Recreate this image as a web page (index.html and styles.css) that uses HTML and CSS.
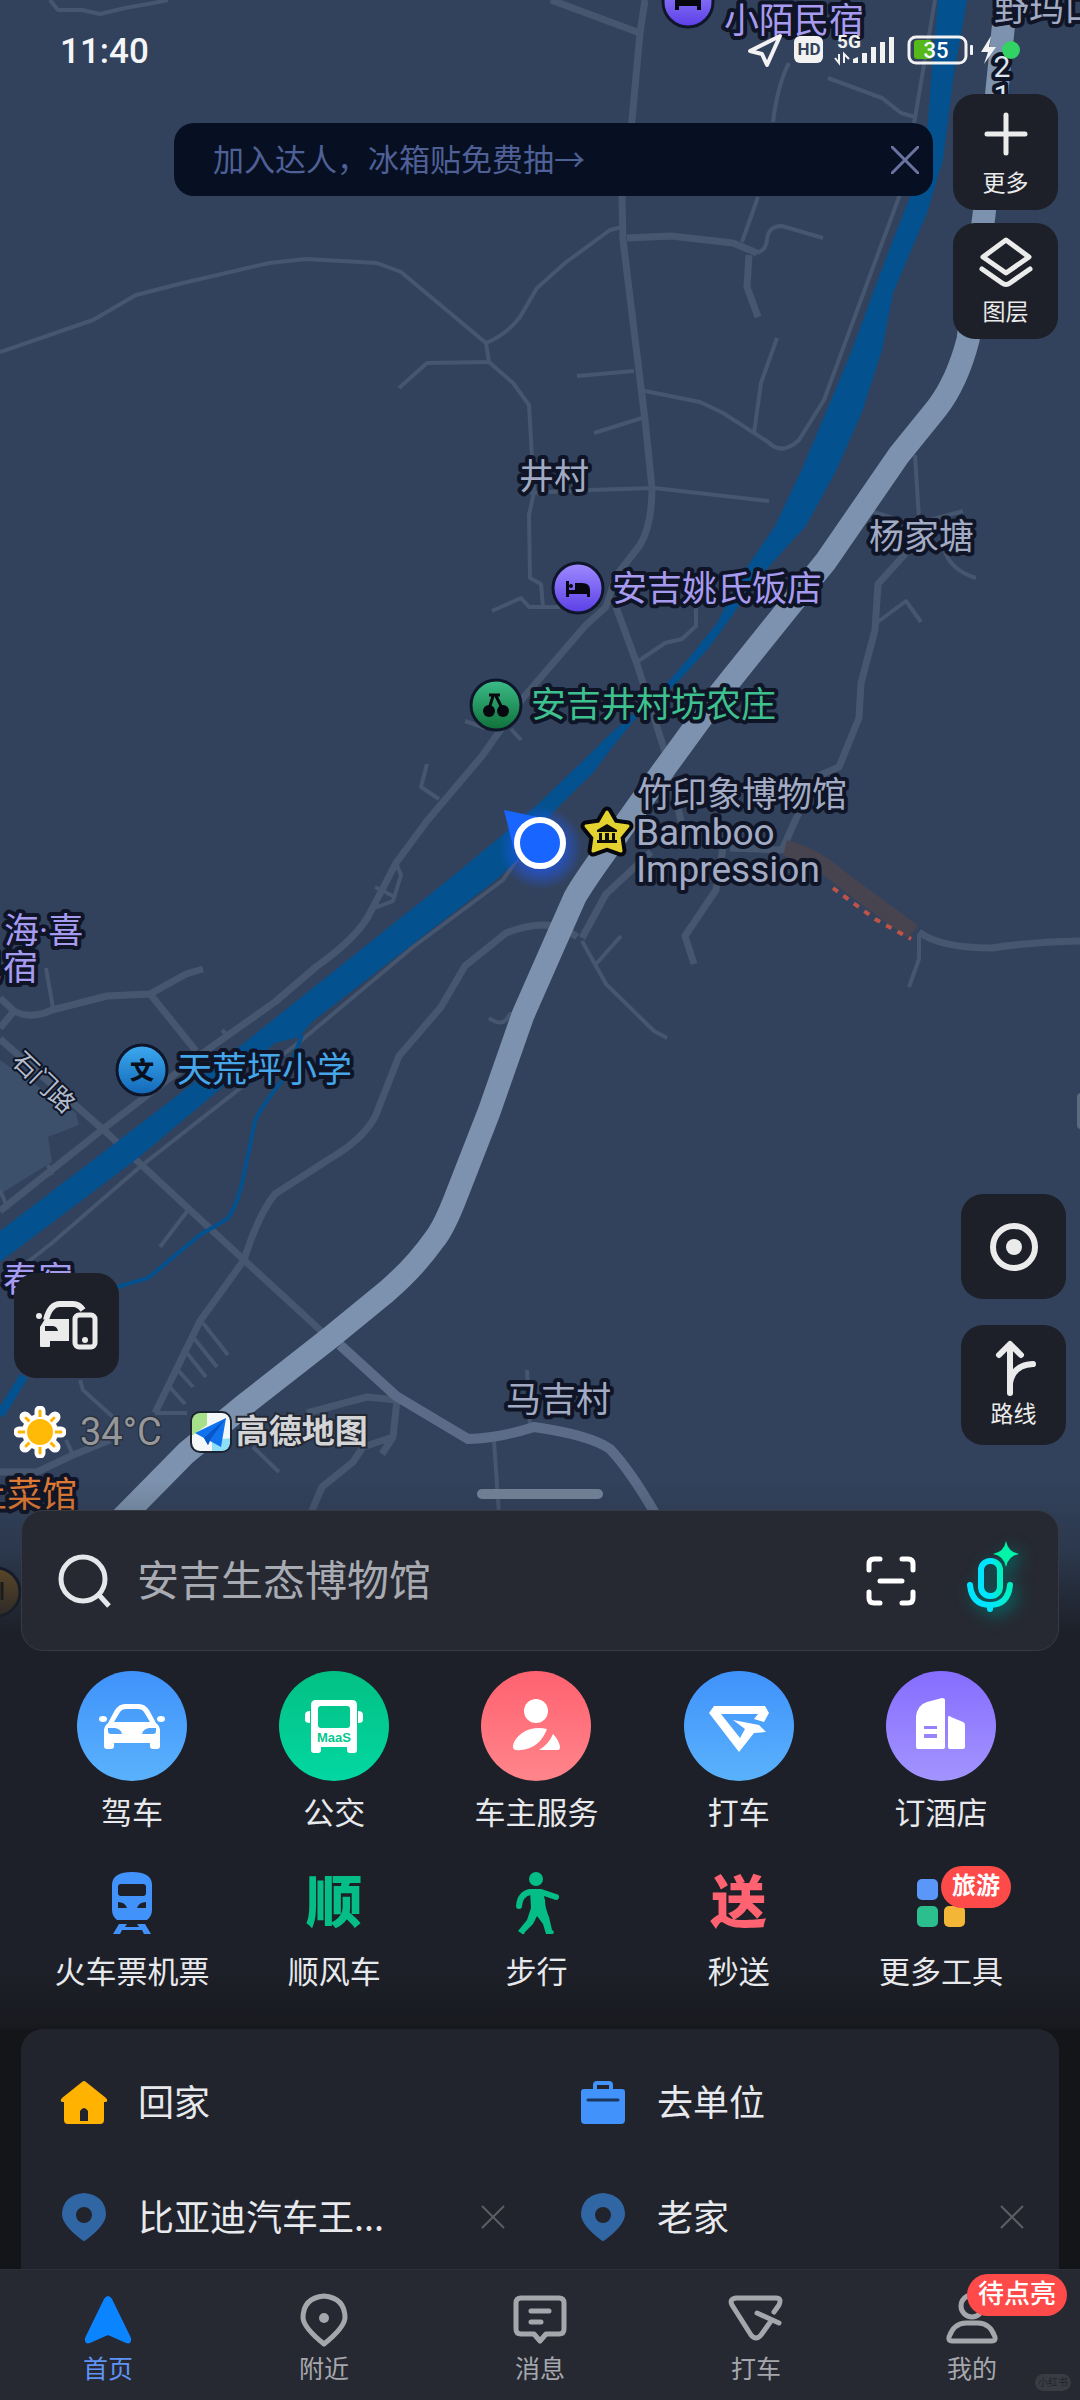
FILE: index.html
```html
<!DOCTYPE html>
<html lang="zh-CN">
<head>
<meta charset="utf-8">
<meta name="viewport" content="width=device-width, initial-scale=1">
<title>高德地图</title>
<link rel="stylesheet" href="styles.css">
</head>
<body>
<div class="app">
  <svg class="map" viewBox="0 0 1080 1660" preserveAspectRatio="xMidYMin slice" role="img" aria-label="地图">
    <defs>
      <linearGradient id="fade" x1="0" y1="0" x2="0" y2="1"><stop offset="0" stop-color="#1d2028" stop-opacity="0"/><stop offset=".4" stop-color="#1d2028" stop-opacity=".3"/><stop offset=".85" stop-color="#1d2028"/><stop offset="1" stop-color="#1d2028"/></linearGradient>
      <linearGradient id="violet" x1="0" y1="0" x2="0" y2="1"><stop offset="0" stop-color="#9f8bff"/><stop offset="1" stop-color="#5b3fe6"/></linearGradient>
      <linearGradient id="green" x1="0" y1="0" x2="0" y2="1"><stop offset="0" stop-color="#3cbd8a"/><stop offset="1" stop-color="#0f7038"/></linearGradient>
      <linearGradient id="azure" x1="0" y1="0" x2="0" y2="1"><stop offset="0" stop-color="#3da9f0"/><stop offset="1" stop-color="#1268b8"/></linearGradient>
      <radialGradient id="glow"><stop offset=".5" stop-color="#1f5cff" stop-opacity=".6"/><stop offset="1" stop-color="#1f5cff" stop-opacity="0"/></radialGradient>
    </defs>
    <rect width="1080" height="1660" fill="#32425c"/>
    <path fill="#3c506c" d="M0 1060L76 1113L79 1125L48 1137L52 1162L0 1194Z"/>
    <g class="road thin">
      <path d="M50 0L58 10L82 10L100 14L125 8L148 4L168 0"/>
      <path d="M0 352L93 320L136 295L183 283L269 263L306 259L377 263L401 272L486 343L489 362L513 383L529 405L534 492L529 515L530 578L541 584L543 607"/>
      <path d="M492 611L521 598L529 607L560 607"/>
      <path d="M486 343Q506 335 520 317L537 288L565 263L610 230L622 227"/>
      <path d="M399 388L427 363L489 362M577 376L634 371M594 433L642 418M530 493L590 490L654 488L769 501"/>
      <path d="M757 253Q766 250 767 240Q768 226 782 226L823 238"/>
      <path d="M789 63Q778 83 773 122M758 197L742 242M828 78L882 98L901 113L915 117"/>
      <path d="M935 0L915 118L899 197L824 400L799 440Q782 456 768 442L723 413L700 402L645 391M777 338L761 383L754 433"/>
      <path d="M915 455L919 519M871 511L902 521L930 520L963 511M944 549Q950 570 976 578M875 624L906 601L921 622"/>
      <path d="M919 934V959L909 987M696 607V626L682 639L665 643L637 662M427 764L421 787L439 799M465 721L485 728M511 729L521 740M396 863L401 875L393 901L372 909M375 887L393 896"/>
      <path d="M582 941L606 984L654 1031L667 1038M621 936L596 964M489 1018Q500 1026 506 1020L510 1014H518"/>
      <path d="M530 840L503 880L413 947L303 1039L141 1166L52 1243L20 1268"/>
      <path d="M46 968L53 1008M189 1209L172 1231L160 1247M0 1190L8 1209M222 1030L228 1036M48 1165L52 1175"/>
      <path d="M203 1323L228 1355M193 1337L217 1367M187 1353L206 1377M177 1369L193 1387M168 1385L185 1404"/>
      <path d="M80 1380L83 1390L113 1417M155 1413L187 1413M253 1447L279 1472M527 1370L530 1427M494 1441L499 1515M66 1440L73 1455"/>
    </g>
    <g class="road mid">
      <path d="M645 0L640 33L632 120L622 197L623 240L645 420L652 488Q652 525 640 545L616 576L606 607L585 626L523 698L482 756L427 821L396 863L372 909Q360 936 317 966L275 1002L200 1055L103 1129L0 1211"/>
      <path d="M616 607L637 664L665 752L682 825"/>
      <path d="M551 0L640 33M627 238L671 236L733 243L757 253M749 255L747 287L758 317"/>
      <path d="M906 553L878 584L875 630L861 683L859 718L839 767L816 777L795 821L782 850L730 848M723 848L716 890L685 936L694 964"/>
      <path d="M919 932Q940 948 992 948Q1030 942 1080 941M651 852L606 894L582 938"/>
      <path d="M577 937Q551 915 506 933L465 966L441 1007L399 1056L375 1117Q362 1140 331 1158L275 1194Q258 1215 244 1260L200 1321L155 1413"/>
      <path d="M0 1039L107 1133L244 1260L331 1340"/>
      <path d="M0 998L14 1011Q31 1020 52 1010L107 996L150 994L186 974L203 969M150 994L196 1051M14 1011L0 1028"/>
      <path d="M0 1472H37L73 1455L110 1440M310 1515L322 1487L353 1462L363 1447L393 1437L397 1400L367 1397L307 1413M393 1437L382 1454"/>
    </g>
    <path fill="#04518f" d="M938 0H967L953 80L943 160L927 213L893 293L882 350L862 412L837 469L806 526L793 540L757 580L727 623L707 650L673 687L640 713L610 750L593 773L553 812L530 848L496 880L313 1021L299 1037L275 1043L138 1158L0 1262V1231L169 1102L244 1043L448 880L506 832L537 805L587 757L607 737L634 713L667 683L693 653L717 623L743 573L775 526L802 469L826 412L852 350L873 293L893 240L910 197L928 123L931 80Z"/>
    <path class="stream" d="M302 1035L286 1076Q262 1105 255 1121L244 1174Q238 1205 227 1219L200 1235L148 1278L117 1287"/>
    <path class="stream wide" d="M24 1376L0 1415"/>
    <path class="byway" d="M340 1345L396 1396L468 1439Q500 1438 534 1427Q590 1435 610 1449Q630 1470 656 1515"/>
    <path class="highway" d="M1004 20L997 90L984 215L968 340Q957 382 937 408L899 455L826 561L716 698L654 783L606 851Q585 880 575 897L556 940L523 1015L489 1112L457 1194Q444 1228 434 1240Q415 1267 386 1292L331 1337L248 1402L186 1453L118 1522"/>
    <path class="works" d="M785 848Q815 856 840 878L913 932"/>
    <path class="works-line" d="M833 888L875 919L911 939"/>

    <g class="pin">
      <circle cx="688" cy="2" r="25" fill="url(#violet)"/>
      <path fill="#07080f" stroke="none" d="M675 -12V10H679V6H697V10H701V-2L690 -8H679V-12Z"/>
      <circle cx="578" cy="588" r="25" fill="url(#violet)"/>
      <path fill="#07080f" stroke="none" d="M566 581V597H569V594H587V597H590V590Q590 583 582 583H575V590H569V581ZM569 586a2 2 0 1 0 4 0a2 2 0 1 0-4 0Z"/>
      <circle cx="496" cy="705" r="25" fill="url(#green)"/>
      <path fill="none" stroke="#07080f" stroke-width="3" d="M489 695H500M493 696L489 709M496 696L502 708"/>
      <circle cx="489" cy="711" r="6" fill="#07080f" stroke="none"/><circle cx="503" cy="711" r="6" fill="#07080f" stroke="none"/>
      <circle cx="142" cy="1070" r="25" fill="url(#azure)"/>
      <circle cx="-4" cy="1592" r="24" fill="#8a6428"/>
      <path fill="none" stroke="#171308" d="M2 1582V1600"/>
      <path fill="#07080f" stroke="#07080f" stroke-width="11" stroke-linejoin="round" d="M607 812L614 824L628 826L619 837L621 851L607 846L593 851L595 837L586 826L600 824Z"/>
      <path fill="#e3d22f" stroke="#e3d22f" stroke-linejoin="round" d="M607 812L614 824L628 826L619 837L621 851L607 846L593 851L595 837L586 826L600 824Z"/>
      <path fill="#0d0d0a" stroke="none" d="M607 824L617 830V832H597V830ZM599 833H602V840H599ZM605 833H609V840H605ZM612 833H615V840H612ZM597 840H617V843H597Z"/>
    </g>
    <g class="labels">
      <text class="lodging" x="724" y="33">小陌民宿</text>
      <text class="village" x="994" y="21">野玛口</text>
      <text class="village" x="519" y="489">井村</text>
      <text class="village" x="869" y="549">杨家塘</text>
      <text class="lodging" x="612" y="601">安吉姚氏饭店</text>
      <text class="farm" x="531" y="717">安吉井村坊农庄</text>
      <text class="village" x="637" y="807">竹印象博物馆</text>
      <text class="village latin" x="636" y="845">Bamboo</text>
      <text class="village latin" x="636" y="882">Impression</text>
      <text class="lodging" x="4" y="943">海·喜</text>
      <text class="lodging" x="-32" y="980">民宿</text>
      <text class="school" x="177" y="1082">天荒坪小学</text>
      <text class="school-glyph" x="142" y="1079">文</text>
      <text class="street" x="44" y="1091" transform="rotate(44 44 1082)">石门路</text>
      <text class="lodging" x="3" y="1292">春宿</text>
      <text class="village" x="506" y="1412">马吉村</text>
      <text class="food" x="-28" y="1507">土菜馆</text>
      <text class="shield" x="1002" y="77">2</text>
      <text class="shield" x="1002" y="106">1</text>
    </g>
    <circle cx="541" cy="848" r="42" fill="url(#glow)"/>
    <path fill="#1866ff" d="M504 810L542 818L514 850Z"/>
    <circle cx="540" cy="843" r="23" fill="#1866ff" stroke="#fff" stroke-width="6"/>
    <rect x="1077" y="1093" width="8" height="36" rx="4" fill="#5c6a80"/>
    <rect y="1480" width="1080" height="180" fill="url(#fade)"/>
  </svg>

  <main class="stage">
    <header class="status">
      <time>11:40</time>
      <svg width="272" height="38" viewBox="0 0 272 38" role="img" aria-label="状态">
        <path d="M2 19L32 4L19 33L14 22Z" fill="none" stroke="#f2f2f2" stroke-width="4" stroke-linejoin="round"/>
        <rect x="46" y="4" width="29" height="27" rx="6" fill="#f2f2f2"/>
        <text class="hd" x="61" y="23">HD</text>
        <text class="cell" x="89" y="16">5G</text>
        <path d="M91 22V31L87 26M96 31V22L101 27" fill="none" stroke="#f2f2f2" stroke-width="2"/>
        <path d="M105 31V27L110 25V31ZM114 21h5v10h-5zM123 15h5v16h-5zM132 10h5v21h-5zM141 5h5v26h-5z" fill="#f2f2f2"/>
        <rect x="166" y="8" width="18" height="19" rx="3" fill="#55b91b"/>
        <rect x="161" y="5" width="57" height="26" rx="7" fill="none" stroke="#f2f2f2" stroke-width="3"/>
        <rect x="222" y="13" width="3" height="10" rx="1" fill="#f2f2f2"/>
        <text class="charge" x="188" y="26">35</text>
        <path d="M243 4L233 20H240L236 32L248 15H241Z" fill="#f2f2f2"/>
        <circle cx="263" cy="18" r="9" fill="#33d264"/>
      </svg>
    </header>

    <div class="top-row">
      <aside class="promo">
        <a href="#">加入达人，冰箱贴免费抽→</a>
        <button type="button" aria-label="关闭"><svg width="28" height="28" viewBox="0 0 28 28"><path d="M1 1L27 27M27 1L1 27" stroke="#6a749f" stroke-width="3" stroke-linecap="round"/></svg></button>
      </aside>
      <div class="tool-stack">
        <button class="map-btn" type="button">
          <svg width="56" height="56" viewBox="0 0 56 56"><path d="M28 9V47M9 28H47" stroke="#ebebeb" stroke-width="5" stroke-linecap="round"/></svg>更多
        </button>
        <button class="map-btn" type="button">
          <svg width="56" height="56" viewBox="0 0 56 56"><g fill="none" stroke="#ebebeb" stroke-width="5" stroke-linejoin="round" stroke-linecap="round"><path d="M28 5L51 22L28 38L5 22Z"/><path d="M4 34L24 48Q28 51 32 48L52 34"/></g></svg>图层
        </button>
      </div>
    </div>

    <div class="map-foot">
      <div class="foot-left">
        <button class="map-btn" type="button" aria-label="车机互联">
          <svg width="64" height="50" viewBox="0 0 64 50"><path d="M11 19Q15 3 25 3H38Q44 3 48 9" fill="none" stroke="#ebebeb" stroke-width="6"/><circle cx="4" cy="15" r="3" fill="#ebebeb"/><path fill="#ebebeb" fill-rule="evenodd" d="M10 18H34V40H15V45Q15 46 14 46H6Q5 46 5 45V26ZM10 25V30H23Q22 25 17 25Z"/><rect x="40" y="14" width="20" height="32" rx="4" fill="none" stroke="#ebebeb" stroke-width="5"/><circle cx="50" cy="39" r="3" fill="#ebebeb"/></svg>
        </button>
        <div class="weather">
          <svg width="52" height="52" viewBox="0 0 52 52"><path d="M26 5V47M5 26H47M11 11L41 41M41 11L11 41" stroke="#fff" stroke-width="11" stroke-linecap="round"/><circle cx="26" cy="26" r="18" fill="#fff"/><path d="M26 5V47M5 26H47M12 12L40 40M40 12L12 40" stroke="#ffb400" stroke-width="3" stroke-linecap="round"/><circle cx="26" cy="26" r="15" fill="#fff"/><circle cx="26" cy="26" r="13" fill="#ffba08"/></svg>
          <span class="temp">34°C</span>
          <svg width="42" height="42" viewBox="0 0 42 42"><clipPath id="tile"><rect x="2" y="2" width="38" height="38" rx="8"/></clipPath><g clip-path="url(#tile)"><path fill="#f4f7f8" d="M0 0H42V42H0Z"/><path fill="#a7e08a" d="M0 0H17V14L0 26Z"/><path fill="#8fe0f7" d="M22 29L42 27V42H22Z"/></g><path fill="#1172ee" d="M36 7L5 22L14 27L18 34L20 30L31 36Z"/><path fill="#0a55c8" d="M36 7L14 27L18 34L20 29Z"/><rect x="1" y="1" width="40" height="40" rx="9" fill="none" stroke="#1c2431" stroke-width="2"/></svg>
          <strong class="brand">高德地图</strong>
        </div>
      </div>
      <div class="foot-right">
        <button class="map-btn" type="button" aria-label="定位"><svg width="50" height="50" viewBox="0 0 50 50"><circle cx="25" cy="25" r="21" fill="none" stroke="#ebebeb" stroke-width="6"/><circle cx="25" cy="25" r="8" fill="#ebebeb"/></svg></button>
        <button class="map-btn" type="button"><svg width="56" height="60" viewBox="0 0 56 60"><g fill="none" stroke="#ebebeb" stroke-width="6" stroke-linecap="round" stroke-linejoin="round"><path d="M24 54V6M13 16L24 5L35 16"/><path d="M24 44Q27 26 47 25"/></g></svg>路线</button>
      </div>
    </div>
    <div class="handle"></div>
  </main>

  <section class="sheet">
    <form class="search">
      <svg width="54" height="54" viewBox="0 0 54 54"><circle cx="25" cy="25" r="22" fill="none" stroke="#e6e7ea" stroke-width="5"/><path d="M41 41L51 52" stroke="#e6e7ea" stroke-width="5"/></svg>
      <input type="search" placeholder="安吉生态博物馆" aria-label="搜索地点">
      <button type="button" aria-label="扫一扫"><svg width="52" height="52" viewBox="0 0 52 52"><path d="M4 15V9Q4 4 9 4H15M37 4H43Q48 4 48 9V15M48 37V43Q48 48 43 48H37M15 48H9Q4 48 4 43V37M15 26H37" fill="none" stroke="#fff" stroke-width="5" stroke-linecap="round"/></svg></button>
      <button type="button" aria-label="语音搜索"><svg class="mic" width="54" height="84" viewBox="0 0 54 84"><defs><linearGradient id="aqua" x1="0" y1="0" x2="1" y2="0"><stop offset=".5" stop-color="#00e5ff"/><stop offset="1" stop-color="#00f0c0"/></linearGradient></defs><g fill="none" stroke="url(#aqua)" stroke-width="6" stroke-linecap="round"><rect x="15" y="22" width="19" height="35" rx="9"/><path d="M4 46Q6 66 24 66Q42 66 44 46M24 67V70"/></g><path fill="#00f5a8" d="M40 2Q42 13 53 15Q42 17 40 28Q38 17 27 15Q38 13 40 2Z"/></svg></button>
    </form>

    <nav class="tools" aria-label="出行工具">
      <a href="#"><svg class="disc" viewBox="0 0 110 110"><defs><linearGradient id="b1" x1="0" y1="0" x2="0" y2="1"><stop stop-color="#3f92fb"/><stop offset="1" stop-color="#5ab2fc"/></linearGradient></defs><circle cx="55" cy="55" r="55" fill="url(#b1)"/><path fill="#fff" fill-rule="evenodd" d="M31 52L38 39Q42 33 48 33H62Q68 33 72 39L79 52Q83 55 83 60V75Q83 78 80 78H76Q73 78 73 75V72H37V75Q37 78 34 78H30Q27 78 27 75V60Q27 55 31 52ZM37 51H73L67 41Q65 38 61 38H49Q45 38 43 41ZM31 57V60Q31 63 34 63H45Q44 58 38 57ZM79 57V60Q79 63 76 63H65Q66 58 72 57Z"/><ellipse cx="26" cy="48" rx="4" ry="3" fill="#fff"/><ellipse cx="84" cy="48" rx="4" ry="3" fill="#fff"/></svg><span>驾车</span></a>
      <a href="#"><svg class="disc" viewBox="0 0 110 110"><defs><linearGradient id="g1" x1="0" y1="0" x2="0" y2="1"><stop stop-color="#02c083"/><stop offset="1" stop-color="#03d7a2"/></linearGradient></defs><circle cx="55" cy="55" r="55" fill="url(#g1)"/><path fill="#fff" fill-rule="evenodd" d="M37 29H73Q78 29 78 34V79Q78 82 75 82H71Q68 82 68 79V76H42V79Q42 82 39 82H35Q32 82 32 79V34Q32 29 37 29ZM42 35Q39 35 39 38V54Q39 57 42 57H68Q71 57 71 54V38Q71 35 68 35ZM31 40Q26 40 26 44V49Q26 52 31 52ZM79 40Q84 40 84 44V49Q84 52 79 52Z"/><text class="maas" x="55" y="71">MaaS</text></svg><span>公交</span></a>
      <a href="#"><svg class="disc" viewBox="0 0 110 110"><defs><linearGradient id="r1" x1="0" y1="0" x2="0" y2="1"><stop stop-color="#ff6270"/><stop offset="1" stop-color="#ff858b"/></linearGradient></defs><circle cx="55" cy="55" r="55" fill="url(#r1)"/><g fill="#fff"><circle cx="55" cy="40" r="12"/><path d="M66 58Q52 55 41 62Q32 69 32 76Q32 80 40 79Q59 77 66 58Z"/><path d="M72 63Q78 69 79 76Q79 79 77 79H58Q68 73 72 63Z"/></g></svg><span>车主服务</span></a>
      <a href="#"><svg class="disc" viewBox="0 0 110 110"><circle cx="55" cy="55" r="55" fill="url(#b1)"/><path fill="#fff" d="M30 35H81L85 42L80 51L70 48L74 43H37L56 67L61 58L49 49L75 54L82 61L70 62L55 81L25 42Z"/></svg><span>打车</span></a>
      <a href="#"><svg class="disc" viewBox="0 0 110 110"><defs><linearGradient id="v1" x1="0" y1="0" x2="0" y2="1"><stop stop-color="#866dff"/><stop offset="1" stop-color="#a394ff"/></linearGradient></defs><circle cx="55" cy="55" r="55" fill="url(#v1)"/><path fill="#fff" fill-rule="evenodd" d="M30 76V46Q31 34 41 31L56 27Q59 27 59 29V76Q59 78 57 78H32Q30 78 30 76ZM38 55V58H51V55ZM38 63V67H51V63ZM62 46Q63 44 65 46L77 51Q79 52 79 54V76Q79 78 77 78H64Q62 78 62 76Z"/></svg><span>订酒店</span></a>

      <a href="#"><svg class="glyph" viewBox="0 0 66 66"><path fill="#4193fb" fill-rule="evenodd" d="M13 14Q14 2 33 2Q52 2 53 14V40Q53 46 48 50H18Q13 46 13 40ZM22 14Q19 14 19 17V23Q19 26 22 26H44Q47 26 47 23V17Q47 14 44 14ZM19 32V38H28Q26 32 19 32ZM47 32V38H38Q40 32 47 32ZM20 54H28L26 57H40L38 54H46L52 64H45L43 60H23L21 64H14Z"/></svg><span>火车票机票</span></a>
      <a href="#"><b class="glyph word mint">顺</b><span>顺风车</span></a>
      <a href="#"><svg class="glyph" viewBox="0 0 66 66"><circle cx="33" cy="9" r="7" fill="#05bd86"/><path d="M16 36Q17 24 27 22H38L53 27" fill="none" stroke="#05bd86" stroke-width="6" stroke-linecap="round" stroke-linejoin="round"/><path fill="#05bd86" d="M27 20H39L42 30Q42 38 46 47L49 60Q52 61 50 64H43L40 54L34 46L30 54L22 62Q21 66 18 63L15 61L24 50L28 38Z"/></svg><span>步行</span></a>
      <a href="#"><b class="glyph word coral">送</b><span>秒送</span></a>
      <a href="#"><span class="badged"><svg class="glyph" viewBox="0 0 66 66"><rect x="9" y="9" width="21" height="21" rx="5" fill="#5b96f9"/><rect x="9" y="36" width="21" height="21" rx="5" fill="#2abf8d"/><rect x="36" y="36" width="21" height="21" rx="5" fill="#f3b636"/></svg><em class="badge">旅游</em></span><span>更多工具</span></a>
    </nav>

    <ul class="places">
      <li><a href="#"><svg width="48" height="48" viewBox="0 0 48 48"><path fill="#ffb300" fill-rule="evenodd" d="M22 4Q24 2 26 4L46 20Q49 24 45 24H44V42Q44 46 40 46H8Q4 46 4 42V24H3Q-1 24 2 20ZM20 43H28V33Q24 27 20 33Z"/></svg><span>回家</span></a></li>
      <li><a href="#"><svg width="48" height="48" viewBox="0 0 48 48"><path fill="#4193fb" fill-rule="evenodd" d="M14 11V7Q14 3 18 3H30Q34 3 34 7V11H43Q46 11 46 14V42Q46 46 42 46H6Q2 46 2 42V14Q2 11 5 11ZM18 11H30V7H18Z"/><path d="M9 22H39" stroke="#1d365e" stroke-width="3" stroke-linecap="round"/></svg><span>去单位</span></a></li>
      <li><a href="#"><svg width="48" height="48" viewBox="0 0 48 48"><path fill="#3166a5" fill-rule="evenodd" d="M24 0Q45 2 46 21Q46 32 26 47Q24 49 22 47Q2 32 2 21Q3 2 24 0ZM24 14A8 8 0 1 0 24 30A8 8 0 1 0 24 14Z"/></svg><span>比亚迪汽车王...</span></a><button type="button" aria-label="移除"><svg width="24" height="24" viewBox="0 0 24 24"><path d="M1 1L23 23M23 1L1 23" stroke="#5b5e65" stroke-width="2"/></svg></button></li>
      <li><a href="#"><svg width="48" height="48" viewBox="0 0 48 48"><path fill="#3166a5" fill-rule="evenodd" d="M24 0Q45 2 46 21Q46 32 26 47Q24 49 22 47Q2 32 2 21Q3 2 24 0ZM24 14A8 8 0 1 0 24 30A8 8 0 1 0 24 14Z"/></svg><span>老家</span></a><button type="button" aria-label="移除"><svg width="24" height="24" viewBox="0 0 24 24"><path d="M1 1L23 23M23 1L1 23" stroke="#5b5e65" stroke-width="2"/></svg></button></li>
    </ul>
  </section>

  <nav class="tabs" aria-label="主导航">
    <a class="current" href="#" aria-current="page"><svg viewBox="0 0 56 56"><path fill="#0a84ff" d="M24 7Q28 1 32 7L51 46Q52 53 46 51L28 43L10 51Q4 53 5 46Z"/></svg>首页</a>
    <a href="#"><svg viewBox="0 0 56 56"><path fill="none" stroke="#a5a7ac" stroke-width="5" stroke-linejoin="round" d="M28 4Q49 6 49 26Q48 36 28 52Q8 36 7 26Q7 6 28 4Z"/><circle cx="28" cy="26" r="5" fill="#a5a7ac"/></svg>附近</a>
    <a href="#"><svg viewBox="0 0 56 56"><path fill="none" stroke="#a5a7ac" stroke-width="5" stroke-linejoin="round" stroke-linecap="round" d="M9 6H47Q52 6 52 11V37Q52 42 47 42H34L28 49L22 42H9Q4 42 4 37V11Q4 6 9 6ZM19 19H37M19 30H29"/></svg>消息</a>
    <a href="#"><svg viewBox="0 0 56 56"><path fill="none" stroke="#a5a7ac" stroke-width="5" stroke-linejoin="round" stroke-linecap="round" d="M46 20L51 13Q54 6 48 6H8Q1 7 4 13L23 43Q28 49 33 43L43 29M29 21L51 31"/></svg>打车</a>
    <a href="#"><span class="badged"><svg viewBox="0 0 56 56"><g fill="none" stroke="#a5a7ac" stroke-width="5" stroke-linejoin="round"><circle cx="28" cy="14" r="11"/><path d="M5 45Q10 31 22 31H34Q46 31 51 45Q52 49 48 49H8Q4 49 5 45Z"/></g></svg><em class="badge notice">待点亮</em></span>我的</a>
    <small class="mark">小红书</small>
  </nav>
</div>
</body>
</html>
```
FILE: styles.css
```css
* { box-sizing: border-box; }

body {
  margin: 0;
  background: #141518;
  color: #e8e9ec;
  font-family: Roboto, "Noto Sans CJK SC", sans-serif;
}

a { color: inherit; text-decoration: none; }

button {
  padding: 0;
  border: 0;
  background: none;
  color: inherit;
  font: inherit;
  cursor: pointer;
}

svg { display: block; flex: none; }

.app {
  position: relative;
  display: flex;
  flex-direction: column;
  min-height: 100vh;
  overflow: hidden;
}

/* Map backdrop */
.map {
  position: absolute;
  top: 0;
  left: 0;
  width: 100%;
}

.road { fill: none; stroke: #46566f; stroke-linejoin: round; }
.thin { stroke-width: 4; }
.mid { stroke-width: 7; }
.stream { fill: none; stroke: #04518f; stroke-width: 4; }
.stream.wide { stroke-width: 9; }
.byway { fill: none; stroke: #5a6c88; stroke-width: 10; }
.highway { fill: none; stroke: #7d92ae; stroke-width: 23; stroke-linejoin: round; }
.works { fill: none; stroke: #47444f; stroke-width: 16; }
.works-line { fill: none; stroke: #c05347; stroke-width: 4; stroke-dasharray: 6 7; }
.pin { stroke: #10162a; stroke-width: 3; }

.labels text {
  font-size: 35px;
  paint-order: stroke;
  stroke: #0f1526;
  stroke-width: 8px;
  stroke-linejoin: round;
}

.labels .village { fill: #a2abc3; }
.labels .latin { font-size: 37px; }
.labels .lodging { fill: #a79bf0; }
.labels .farm { fill: #3fc08f; }
.labels .school { fill: #46a6ea; }
.labels .food { fill: #e07a34; }
.labels .street { fill: #b4bccb; font-size: 25px; stroke-width: 4px; text-anchor: middle; }
.labels .shield { fill: #dfe5ee; font-size: 30px; text-anchor: middle; }
.labels .school-glyph { fill: #07101c; stroke: none; font-size: 24px; font-weight: 900; text-anchor: middle; }

/* Map controls */
.stage {
  position: relative;
  flex: 1;
  display: flex;
  flex-direction: column;
}

.status {
  display: flex;
  align-items: center;
  justify-content: space-between;
  height: 94px;
  padding: 8px 60px 0;
}

.status time { color: #f4f5f7; font-size: 35px; font-weight: 500; }
.status text { font-family: Roboto, sans-serif; }
.hd { fill: #32425c; font-size: 17px; font-weight: 700; text-anchor: middle; }
.cell { fill: #f2f2f2; font-size: 19px; font-weight: 700; }
.charge { fill: #fff; font-size: 22px; font-weight: 500; text-anchor: middle; }

.top-row {
  display: flex;
  align-items: flex-start;
  gap: 20px;
  padding: 0 22px 0 174px;
}

.promo {
  display: flex;
  flex: 1;
  align-items: center;
  justify-content: space-between;
  height: 73px;
  margin-top: 29px;
  padding: 0 14px 0 39px;
  border-radius: 20px;
  background: #070f22;
  color: #4f6096;
  font-family: "Noto Sans CJK SC", sans-serif;
  font-size: 31px;
  line-height: 44px;
}

.promo a { padding-bottom: 4px; }

.tool-stack { display: flex; flex-direction: column; gap: 13px; }

.map-btn {
  display: flex;
  flex-direction: column;
  align-items: center;
  justify-content: center;
  width: 105px;
  height: 105px;
  border-radius: 22px;
  background: #1d2028;
  color: #ebebeb;
  font-size: 23px;
  line-height: 32px;
}

.tool-stack .map-btn { height: 116px; gap: 6px; padding-top: 2px; }

.map-foot {
  display: flex;
  align-items: flex-end;
  justify-content: space-between;
  margin-top: auto;
  padding: 0 14px;
}

.foot-left { display: flex; flex-direction: column; gap: 28px; }
.foot-right { display: flex; flex-direction: column; gap: 26px; padding-bottom: 13px; }
.foot-right .map-btn:last-child { height: 120px; }

.weather { display: flex; align-items: center; height: 52px; }

.temp {
  margin: 0 28px 0 14px;
  color: #96979a;
  font-size: 38px;
  paint-order: stroke;
  -webkit-text-stroke: 3px #2b3240;
}

.brand {
  margin-left: 4px;
  color: #d3d4d6;
  font-size: 33px;
  line-height: 48px;
  paint-order: stroke;
  -webkit-text-stroke: 4px #232833;
}

.handle {
  align-self: center;
  width: 126px;
  height: 10px;
  margin: 31px 0 11px;
  border-radius: 5px;
  background: #707e93;
}

/* Search and shortcuts */
.sheet {
  position: relative;
  padding: 0 21px;
}

.search {
  display: flex;
  align-items: center;
  height: 141px;
  padding: 0 38px 0 36px;
  border: 1px solid #363a43;
  border-radius: 22px;
  background: #262932;
}

.search input {
  flex: 1;
  min-width: 0;
  height: 80px;
  padding: 2px 26px 0 25px;
  border: 0;
  outline: 0;
  background: none;
  color: #e8e9ec;
  font: inherit;
  font-size: 42px;
}

.search input::placeholder { color: #a9abb2; opacity: 1; }
.search button + button { margin-left: 49px; }
.mic { filter: drop-shadow(5px 5px 8px #00706c); }

.tools {
  display: grid;
  grid-template-columns: repeat(5, 1fr);
  row-gap: 34px;
  margin: 0 -21px;
  padding: 20px 38px 34px 31px;
  background: linear-gradient(#1d2028 0, #1d2028 320px, #17191e 100%);
}

.tools a {
  display: flex;
  flex-direction: column;
  align-items: center;
  font-size: 31px;
  line-height: 44px;
  white-space: nowrap;
}

.disc { width: 110px; height: 110px; margin-bottom: 11px; }
.glyph { width: 66px; height: 66px; margin-bottom: 15px; }
.maas { fill: #04c78e; font: 700 13px "Liberation Sans", sans-serif; text-anchor: middle; }
.word { font-size: 56px; font-weight: 900; line-height: 66px; text-align: center; }
.mint { color: #05bd86; }
.coral { color: #ff6270; }

.badged { position: relative; }

.badge {
  position: absolute;
  top: -4px;
  left: 33px;
  height: 42px;
  padding: 0 11px;
  border-radius: 21px;
  background: #ff4a4a;
  color: #fff;
  font-size: 24px;
  font-style: normal;
  font-weight: 700;
  line-height: 40px;
  white-space: nowrap;
}

.places {
  display: grid;
  grid-template-columns: 1fr 1fr;
  row-gap: 31px;
  margin: 0;
  padding: 31px 0 10px;
  border-radius: 22px 22px 0 0;
  background: #21242c;
  font-family: "Noto Sans CJK SC", sans-serif;
  list-style: none;
}

.places li {
  display: flex;
  align-items: center;
  justify-content: space-between;
  height: 84px;
  padding: 0 35px 0 39px;
}

.places a { display: flex; align-items: center; gap: 30px; font-size: 36px; line-height: 48px; }
.places span { padding-bottom: 4px; }

/* Bottom tabs */
.tabs {
  position: relative;
  display: grid;
  grid-template-columns: repeat(5, 1fr);
  height: 131px;
  padding-top: 22px;
  border-top: 1px solid #2d3039;
  background: #262932;
  color: #a5a7ac;
}

.tabs a {
  display: flex;
  flex-direction: column;
  align-items: center;
  gap: 4px;
  font-size: 25px;
  line-height: 36px;
}

.tabs svg { width: 56px; height: 56px; }
.tabs .current { color: #5f93f5; }
.notice { top: -18px; left: 23px; padding: 0 11px; font-size: 26px; font-weight: 500; }

.mark {
  position: absolute;
  right: 9px;
  bottom: 9px;
  width: 36px;
  border-radius: 9px;
  background: #3a3c43;
  color: #23252b;
  font-size: 10px;
  line-height: 17px;
  text-align: center;
}
```
